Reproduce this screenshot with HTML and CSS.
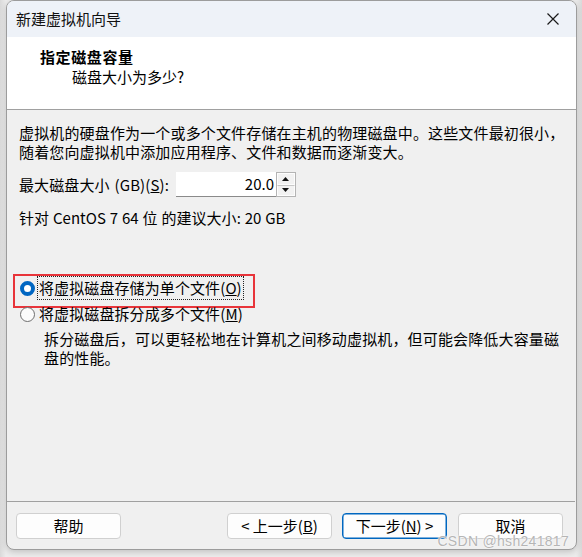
FILE: index.html
```html
<!DOCTYPE html>
<html lang="zh-CN">
<head>
<meta charset="utf-8">
<title>新建虚拟机向导</title>
<link rel="stylesheet" href="styles.css">
</head>
<body>
<div class="window">
  <div class="titlebar">
    <span class="title">新建虚拟机向导</span>
    <svg class="close" width="12" height="12" viewBox="0 0 12 12"><path d="M0.5 0.5 L11.5 11.5 M11.5 0.5 L0.5 11.5" stroke="#1a1a1a" stroke-width="1.2" fill="none"/></svg>
  </div>
  <div class="header">
    <div class="h-title">指定磁盘容量</div>
    <div class="h-sub">磁盘大小为多少?</div>
  </div>
  <div class="content">
    <p class="intro">虚拟机的硬盘作为一个或多个文件存储在主机的物理磁盘中。这些文件最初很小，<br>随着您向虚拟机中添加应用程序、文件和数据而逐渐变大。</p>
    <div class="size-row">
      <span class="label">最大磁盘大小 (GB)(<u>S</u>):</span>
      <div class="spin">
        <div class="spin-input">20.0</div>
        <div class="spin-btns">
          <div class="spin-btn"><svg width="7" height="4" viewBox="0 0 7 4"><path d="M0 4 L3.5 0 L7 4Z" fill="#111"/></svg></div>
          <div class="spin-btn"><svg width="7" height="4" viewBox="0 0 7 4"><path d="M0 0 L3.5 4 L7 0Z" fill="#111"/></svg></div>
        </div>
      </div>
    </div>
    <p class="recommend">针对 CentOS 7 64 位 的建议大小: 20 GB</p>
    <div class="options">
      <div class="radio-row marked">
        <span class="radio checked"></span>
        <span class="radio-label focus">将虚拟磁盘存储为单个文件(<u>O</u>)</span>
      </div>
      <div class="radio-row">
        <span class="radio"></span>
        <span class="radio-label">将虚拟磁盘拆分成多个文件(<u>M</u>)</span>
      </div>
      <p class="desc">拆分磁盘后，可以更轻松地在计算机之间移动虚拟机，但可能会降低大容量磁<br>盘的性能。</p>
    </div>
  </div>
  <div class="footer">
    <button class="btn">帮助</button>
    <div class="nav">
      <button class="btn">&lt; 上一步(<u>B</u>)</button>
      <button class="btn primary">下一步(<u>N</u>) &gt;</button>
      <button class="btn cancel">取消</button>
    </div>
  </div>
  <div class="watermark">CSDN @hsh241817</div>
</div>
</body>
</html>
```
FILE: styles.css
```css
* { box-sizing: border-box; }
html, body {
  margin: 0;
  padding: 0;
  width: 582px;
  height: 557px;
  overflow: hidden;
  background: linear-gradient(90deg, #d9d9d9 0, #ececec 6px, #ececec 576px, #d9d9d9 582px);
  font-family: "Noto Sans CJK SC", "Microsoft YaHei", sans-serif;
  color: #000;
}
.window {
  position: relative;
  margin-left: 6px;
  width: 571px;
  height: 550px;
  border: 1px solid #9c9c9c;
  border-radius: 8px;
  overflow: hidden;
  background: #f0f0f0;
  display: flex;
  flex-direction: column;
  box-shadow: 0 2px 6px rgba(0,0,0,0.18);
}
.titlebar {
  height: 36px;
  flex: none;
  background: #eef2f8;
  display: flex;
  align-items: center;
  justify-content: space-between;
  padding: 0 17px 0 9px;
  font-size: 15px;
  line-height: 20px;
}
.title { color: #111; margin-top: -1px; }
.close { display: block; }
.header {
  flex: none;
  height: 73px;
  background: #fff;
  border-bottom: 1px solid #a0a0a0;
  padding: 10px 0 0 33px;
  font-size: 15px;
  line-height: 20px;
}
.h-title { font-weight: bold; letter-spacing: 0.6px; }
.h-sub { padding-left: 32px; }
.content {
  flex: 1;
  padding: 0 0 0 12px;
  font-size: 15px;
}
.intro {
  margin: 13px 0 0;
  line-height: 19px;
  letter-spacing: 0.15px;
}
.size-row {
  margin-top: 11px;
  display: flex;
  align-items: center;
  gap: 7px;
  height: 25px;
}
.label { line-height: 20px; word-spacing: 1.5px; letter-spacing: 0.1px; }
.spin { display: flex; height: 25px; }
.spin-input {
  width: 100px;
  height: 25px;
  background: #fff;
  border-bottom: 1px solid #8a8a8a;
  text-align: right;
  padding-right: 2px;
  line-height: 24px;
  font-size: 15px;
}
.spin-btns {
  width: 20px;
  height: 25px;
  border: 1px solid #b4b4b4;
  display: flex;
  flex-direction: column;
  background: #f0f0f0;
}
.spin-btn {
  flex: 1;
  display: flex;
  align-items: center;
  justify-content: center;
  background: #f2f2f2;
  border: 1px solid #fdfdfd;
}
.spin-btn + .spin-btn { border-top: 1px solid #c8c8c8; }
.spin-btn svg { display: block; }
.recommend {
  margin: 11px 0 0;
  line-height: 20px;
  word-spacing: 0.4px;
  letter-spacing: 0.05px;
}
.options { margin-top: 47px; }
.radio-row {
  position: relative;
  display: flex;
  align-items: center;
  height: 26px;
  padding-left: 1px;
}
.marked::after {
  content: "";
  position: absolute;
  left: -6px;
  top: -1px;
  width: 238px;
  height: 30px;
  border: 2px solid #e8343a;
  pointer-events: none;
}
.radio {
  width: 15px;
  height: 15px;
  border-radius: 50%;
  border: 1px solid #6e6e6e;
  background: #fbfbfb;
  flex: none;
}
.radio.checked {
  border: 4.5px solid #0066c2;
  background: #fff;
}
.radio-label {
  margin-left: 3px;
  line-height: 22px;
  padding: 0 1px;
  letter-spacing: 0.1px;
}
.focus { outline: 1px dotted #222; outline-offset: 0; }
.desc {
  margin: 2px 0 0 25px;
  line-height: 19px;
  letter-spacing: 0.15px;
}
.footer {
  flex: none;
  height: 48px;
  border-top: 1px solid #a0a0a0;
  margin: 0 1px 0 0;
  display: flex;
  justify-content: space-between;
  align-items: flex-start;
  padding: 11px 12px 0 9px;
}
.nav { display: flex; gap: 10px; }
.btn {
  width: 105px;
  height: 26px;
  border: 1px solid #d0d0d0;
  border-radius: 4px;
  background: #fdfdfd;
  font-family: inherit;
  font-size: 15px;
  line-height: 20px;
  color: #000;
  padding: 0;
}
.btn.primary { border: 1px solid #0067c0; box-shadow: inset 0 0 0 0.5px #0067c0; }
.btn.cancel { margin-left: 1px; }
.watermark {
  position: absolute;
  right: 7px;
  bottom: 0;
  font-family: "Liberation Sans", Arial, sans-serif;
  font-size: 14px;
  color: #b5b5b5;
  text-shadow: 0 0 2px #fff, 0 0 1px #fff;
  letter-spacing: 0.3px;
}
```
